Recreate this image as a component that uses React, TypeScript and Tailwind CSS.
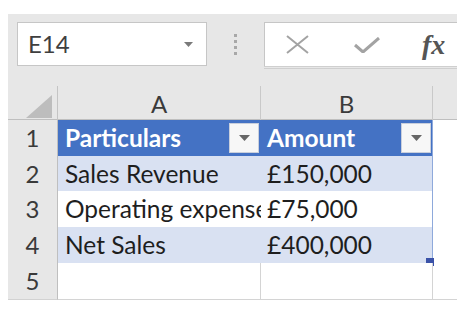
import React from "react";

const font = { fontFamily: "Lato, 'Open Sans', sans-serif" };

function FilterButton() {
  return (
    <div className="shrink-0 w-[30px] h-[30px] bg-[#f7f7f7] border border-[#c9cfdc] flex items-center justify-center">
      <svg width="11" height="6" viewBox="0 0 11 6">
        <path d="M0 0 L11 0 L5.5 6 Z" fill="#666" />
      </svg>
    </div>
  );
}

type Row = {
  n: string;
  a: string;
  b: string;
  h: string;
  kind: "head" | "band" | "plain" | "empty";
};

const rows: Row[] = [
  { n: "1", a: "Particulars", b: "Amount", h: "h-[36px]", kind: "head" },
  { n: "2", a: "Sales Revenue", b: "£150,000", h: "h-[35px]", kind: "band" },
  { n: "3", a: "Operating expense", b: "£75,000", h: "h-[36px]", kind: "plain" },
  { n: "4", a: "Net Sales", b: "£400,000", h: "h-[36px]", kind: "band" },
  { n: "5", a: "", b: "", h: "h-[34px]", kind: "empty" },
];

export default function App() {
  return (
    <div className="w-[470px] h-[309px] bg-white pt-[14px] pl-[8px] overflow-hidden" style={font}>
      <div className="w-[449px] bg-[#e7e7e7]">
        {/* Name box + formula bar */}
        <div className="h-[68px] flex items-start pt-[8px] pl-[9px]">
          <div className="w-[190px] h-[44px] bg-white border border-[#c6c6c6] flex items-center justify-between pl-[10px] pr-[13px]">
            <span className="text-[24px] text-[#3f3f3f] leading-none">E14</span>
            <svg width="9" height="5" viewBox="0 0 9 5">
              <path d="M0 0 L9 0 L4.5 5 Z" fill="#7a7a7a" />
            </svg>
          </div>
          <div className="w-[57px] h-[44px] flex flex-col items-center justify-center gap-[3px] pr-[1px]">
            <div className="w-[3px] h-[3px] bg-[#a8a8a8]" />
            <div className="w-[3px] h-[3px] bg-[#a8a8a8]" />
            <div className="w-[3px] h-[3px] bg-[#a8a8a8]" />
            <div className="w-[3px] h-[3px] bg-[#a8a8a8]" />
          </div>
          <div className="flex-1 h-[48px] flex flex-col">
            <div className="h-[44px] bg-white border-t border-l border-[#c6c6c6] flex items-center">
              <svg width="23" height="19" viewBox="0 0 23 19" className="ml-[21px]">
                <path d="M1 1 L22 18 M22 1 L1 18" stroke="#a3a3a3" strokeWidth="2" fill="none" />
              </svg>
              <svg width="26" height="16" viewBox="0 0 26 16" className="ml-[45px]">
                <path d="M1 8 L9 15 L25 1" stroke="#a3a3a3" strokeWidth="3" fill="none" />
              </svg>
              <span
                className="ml-[42px] text-[28px] italic font-semibold text-[#555] leading-none"
                style={{ fontFamily: "'Liberation Serif', serif" }}
              >
                fx
              </span>
            </div>
            <div className="h-[3px] border-t border-b border-[#cfcfcf]" />
          </div>
        </div>

        {/* Column headers */}
        <div className="grid grid-cols-[50px_203px_172px_24px] h-[38px] border-b border-[#bfbfbf] text-[24px] text-[#3a3a3a]">
          <div className="border-r border-[#c4c4c4] flex items-end justify-end pr-[5px] pb-[4px] mt-[4px]">
            <svg width="26" height="23" viewBox="0 0 26 23">
              <path d="M26 0 L26 23 L0 23 Z" fill="#bdbdbd" />
            </svg>
          </div>
          <div className="border-r border-[#c9c9c9] flex items-center justify-center mt-[4px]">A</div>
          <div className="border-r border-[#c9c9c9] flex items-center justify-center mt-[4px]">B</div>
          <div className="mt-[4px]" />
        </div>

        {/* Rows */}
        {rows.map((r) => {
          const bg =
            r.kind === "head"
              ? "bg-[#4472c4]"
              : r.kind === "band"
              ? "bg-[#d9e1f2]"
              : "bg-white";
          const line =
            r.kind === "empty" ? "border-[#d4d4d4]" : "border-[#9fb4dd]";
          const txt =
            r.kind === "head"
              ? "text-white font-bold"
              : "text-[#1e1e1e]";
          return (
            <div
              key={r.n}
              className={`grid grid-cols-[50px_203px_172px_24px] ${r.h} text-[24.5px]`}
            >
              <div className="bg-[#e7e7e7] border-r border-b border-r-[#bfbfbf] border-b-[#d2d2d2] flex items-center justify-center text-[#3a3a3a] text-[24px]">
                {r.n}
              </div>
              <div
                className={`${bg} border-b ${line} ${
                  r.kind === "empty" ? "border-r border-r-[#d4d4d4]" : ""
                } flex items-center pl-[7px] ${
                  r.kind === "head" ? "pr-[2px]" : ""
                } overflow-hidden whitespace-nowrap ${txt}`}
              >
                <span className="flex-1 overflow-hidden">{r.a}</span>
                {r.kind === "head" && <FilterButton />}
              </div>
              <div
                className={`relative ${bg} border-b border-r ${line} ${
                  r.kind === "empty" ? "border-r-[#d4d4d4]" : "border-r-[#8ea9db]"
                } flex items-center pl-[6px] pr-[1px] whitespace-nowrap ${txt}`}
              >
                <span className="flex-1">{r.b}</span>
                {r.kind === "head" && <FilterButton />}
                {r.n === "4" && (
                  <div className="absolute right-[-2px] bottom-[-2px] w-[8px] h-[8px] bg-[#3a52a8]" />
                )}
              </div>
              <div className="bg-white border-b border-[#d4d4d4]" />
            </div>
          );
        })}
      </div>
    </div>
  );
}
